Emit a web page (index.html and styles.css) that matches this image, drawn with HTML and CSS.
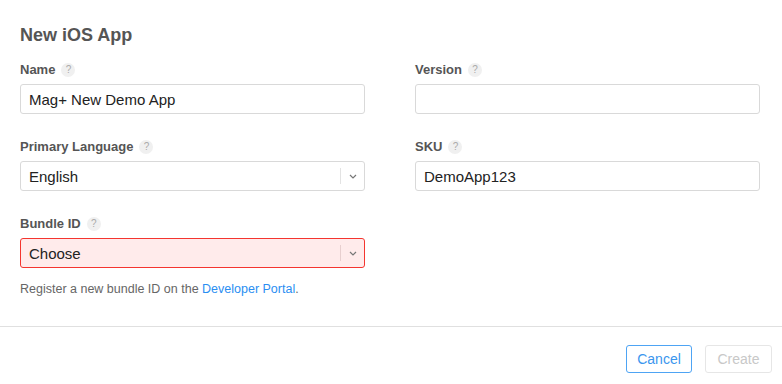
FILE: index.html
```html
<!DOCTYPE html>
<html lang="en">
<head>
    <meta charset="UTF-8">
    <meta name="viewport" content="width=device-width, initial-scale=1.0">
    <title>New iOS App</title>
    <link rel="stylesheet" href="styles.css">
</head>
<body>
    <div class="sheet">
        <div class="content">
            <h1 class="title">New iOS App</h1>
            <div class="form">
                <div class="field">
                    <label class="label">Name <span class="help">?</span></label>
                    <input type="text" class="input" value="Mag+ New Demo App">
                </div>
                <div class="field">
                    <label class="label">Version <span class="help">?</span></label>
                    <input type="text" class="input" value="">
                </div>
                <div class="field">
                    <label class="label">Primary Language <span class="help">?</span></label>
                    <div class="select">
                        <span class="select-value">English</span>
                        <span class="select-arrow"><svg width="8" height="5" viewBox="0 0 8 5"><path d="M1 1l3 3 3-3" fill="none" stroke="#777" stroke-width="1.2"/></svg></span>
                    </div>
                </div>
                <div class="field">
                    <label class="label">SKU <span class="help">?</span></label>
                    <input type="text" class="input" value="DemoApp123">
                </div>
                <div class="field">
                    <label class="label">Bundle ID <span class="help">?</span></label>
                    <div class="select invalid">
                        <span class="select-value">Choose</span>
                        <span class="select-arrow"><svg width="8" height="5" viewBox="0 0 8 5"><path d="M1 1l3 3 3-3" fill="none" stroke="#777" stroke-width="1.2"/></svg></span>
                    </div>
                    <p class="note">Register a new bundle ID on the <a href="#">Developer Portal</a>.</p>
                </div>
            </div>
        </div>
        <div class="footer">
            <button class="btn btn-cancel">Cancel</button>
            <button class="btn btn-create" disabled>Create</button>
        </div>
    </div>
</body>
</html>
```

FILE: styles.css
```css
body {
    margin: 0;
    background: #fff;
    font-family: "Liberation Sans", Arial, sans-serif;
    color: #333;
}
.content {
    padding: 24px 20px 0 20px;
    height: 327px;
    box-sizing: border-box;
    border-bottom: 1px solid #e0e0e0;
}
.title {
    margin: 0 0 16px 0;
    font-size: 18px;
    line-height: 22px;
    font-weight: bold;
    color: #555;
}
.form {
    display: grid;
    grid-template-columns: 345px 345px;
    column-gap: 50px;
    row-gap: 25px;
}
.field {
    display: flex;
    flex-direction: column;
}
.label {
    display: flex;
    align-items: center;
    gap: 6px;
    font-size: 13px;
    line-height: 16px;
    font-weight: bold;
    color: #555;
    margin-bottom: 6px;
}
.help {
    display: inline-flex;
    align-items: center;
    justify-content: center;
    width: 14px;
    height: 14px;
    border-radius: 50%;
    background: #f0f0f0;
    color: #aaa;
    font-size: 10px;
    font-weight: normal;
}
.input,
.select {
    box-sizing: border-box;
    width: 345px;
    height: 30px;
    border: 1px solid #d9d9d9;
    border-radius: 3px;
    background: #fff;
    font-family: inherit;
    font-size: 15px;
    color: #222;
    padding: 0 8px;
    margin: 0;
}
.select {
    display: flex;
    align-items: center;
    justify-content: space-between;
    padding-right: 0;
}
.select-arrow {
    display: flex;
    align-items: center;
    justify-content: center;
    width: 23px;
    height: 16px;
    border-left: 1px solid #e3e3e3;
}
.select.invalid {
    border-color: #f4352f;
    background: #ffebeb;
}
.select.invalid .select-arrow {
    border-left-color: #e8cfcf;
}
.note {
    margin: 13px 0 0 0;
    font-size: 12.5px;
    line-height: 16px;
    color: #666;
}
.note a {
    color: #2a8ef2;
    text-decoration: none;
}
.footer {
    display: flex;
    justify-content: flex-end;
    gap: 13px;
    padding: 18px 10px 0 0;
}
.btn {
    box-sizing: border-box;
    height: 28px;
    padding: 0 10px;
    border-radius: 3px;
    background: #fff;
    font-family: inherit;
    font-size: 14px;
}
.btn-cancel {
    width: 66px;
    border: 1px solid #4ea4f4;
    color: #3a96ee;
}
.btn-create {
    width: 67px;
    border: 1px solid #e6e6e6;
    color: #c8c8c8;
}
```
